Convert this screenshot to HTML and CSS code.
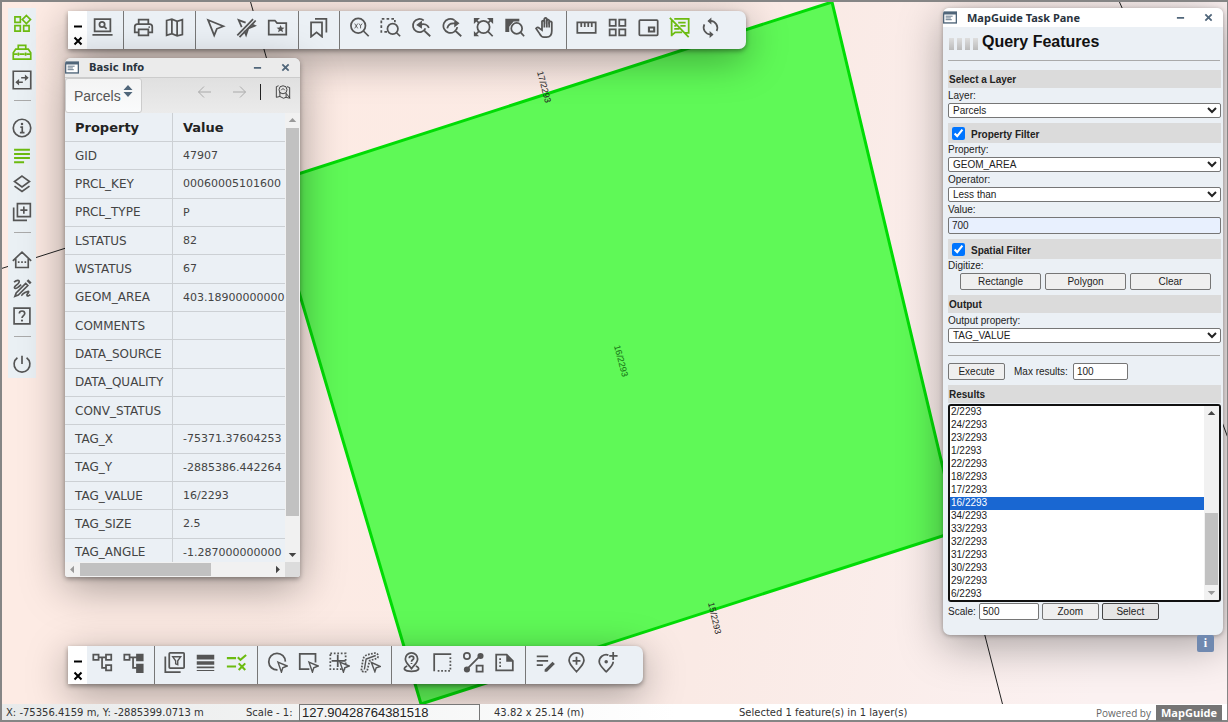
FILE: index.html
```html
<!DOCTYPE html>
<html lang="en">
<head>
<meta charset="utf-8">
<title>MapGuide Viewer</title>
<link rel="stylesheet" href="styles.css">
</head>
<body>
<svg class="defs" aria-hidden="true">
  <symbol id="i-widgets" viewBox="0 0 24 24"><path d="M3.5 3.5h6.5v6.5h-6.5zM3.5 14h6.5v6.5h-6.5zM14 14h6.5v6.5h-6.5zM17.3 1.8l4.9 4.9-4.9 4.9-4.9-4.9z"/></symbol>
  <symbol id="i-toolbox" viewBox="0 0 24 24"><path d="M1.500 20.500v-7.500l3-4.500h15l3 4.500v7.500zM7.500 8V4h9v4M2 14.500h4.500M9 14.500h6M17.500 14.500H22M7.700 12.500v4M16.300 12.500v4"/></symbol>
  <symbol id="i-swap" viewBox="0 0 24 24"><path d="M1.500 1.500h21v21h-21z M11 9.300h6M13 14.700H7"/><path class="f" d="M15.500 5.300l4.500 4-4.500 4zM8.500 10.700l-4.500 4 4.500 4z"/></symbol>
  <symbol id="i-info" viewBox="0 0 24 24"><circle cx="12" cy="12" r="10.500"/><path d="M10 11h2.300v6.500M9.500 17.500h5.500"/><circle class="f" cx="12" cy="7.200" r="1.500"/></symbol>
  <symbol id="i-lines" viewBox="0 0 24 24"><path stroke-width="2.400" d="M2.500 4.500h19M2.500 9.500h19M2.500 14.500h19M2.500 19.500h12"/></symbol>
  <symbol id="i-layers" viewBox="0 0 24 24"><path d="M12 2.500l9 6.500-9 6.500L3 9zM3 14.500l9 6.500 9-6.500"/></symbol>
  <symbol id="i-addlayer" viewBox="0 0 24 24"><path d="M6.500 2h15.500v15.500h-15.500zM2 6.500V22h16M14.200 5.500v8.500M10 9.800h8.500"/></symbol>
  <symbol id="i-home" viewBox="0 0 24 24"><path d="M1 13L12 2.500l11 10.500M4.500 10.500v10.500h15V10.500"/><path class="f" d="M7 13.500h2v2H7zM11 13.500h2v2h-2zM15 13.500h2v2h-2z"/></symbol>
  <symbol id="i-draw" viewBox="0 0 24 24"><path d="M2.500 5c3-3 7-3 6 0S2 10 3 12s5-1 8-4M16.500 6.500L5 18l-1.500 4L7.500 20.500 19 9zM12 21.500c-1-2 8-7 8-5s-3 3-2 4.500 3-.500 4-1"/><path class="f" d="M17.500 3.500l2-2 4 4-2 2z"/></symbol>
  <symbol id="i-help" viewBox="0 0 24 24"><path d="M2.500 2.500h19v19h-19zM8.800 9c0-4 6.500-4 6.500 0 0 2.500-3.300 2.500-3.300 5.500"/><circle class="f" cx="12" cy="17.500" r="1.300"/></symbol>
  <symbol id="i-power" viewBox="0 0 24 24"><path d="M12 2v10M6.500 4.500a9.500 9.500 0 1 0 11 0"/></symbol>
  <symbol id="i-preview" viewBox="0 0 24 24"><path d="M3 2.500h18v14H3zM0.500 20.500h23"/><circle cx="11.500" cy="8.500" r="3"/><path d="M13.700 10.700l3 3"/></symbol>
  <symbol id="i-print" viewBox="0 0 24 24"><path d="M6.500 8V3h11v5M6.500 17.500H2V11q0-3 3-3h14q3 0 3 3v6.500h-4.500M6.500 14h11v7h-11z"/><circle class="f" cx="18.500" cy="11.500" r="1"/></symbol>
  <symbol id="i-map" viewBox="0 0 24 24"><path d="M3 4l6-1.500 6 2.500 6-2v17l-6 1.500-6-2.500-6 2zM9 3v16M15 5v16"/></symbol>
  <symbol id="i-cursor" viewBox="0 0 24 24"><path d="M3.500 3.500l17.500 7-7.500 3-3 7.500z"/></symbol>
  <symbol id="i-nocursor" viewBox="0 0 24 24"><path d="M11 6.500L3 3.500l3.500 8M1.500 21L19.500 2.500M4 23L22.500 4M18 8.500l3.500 1.500-7.500 3-2.500 7.500-2-5"/></symbol>
  <symbol id="i-folder" viewBox="0 0 24 24"><path d="M2 4h7l2.500 3H22v13H2z"/><path class="f" d="M15.500 9l1.300 3 3.200.200-2.500 2 .900 3.200-2.900-1.800-2.900 1.800.900-3.200-2.500-2 3.200-.200z"/></symbol>
  <symbol id="i-bookmarks" viewBox="0 0 24 24"><path d="M3.500 6h12.500V22.500l-6.200-5-6.300 5zM8 2.200h13v15.500"/></symbol>
  <symbol id="i-zoomxy" viewBox="0 0 24 24"><circle cx="10.500" cy="10" r="8.300"/><path d="M16.500 16l6 6"/><path class="t" d="M6.500 7.500l3.500 5.500M10 7.500L6.500 13M11.500 7.500l1.700 2.500 1.800-2.500M13.200 10v3"/></symbol>
  <symbol id="i-zoomrect" viewBox="0 0 24 24"><path stroke-dasharray="3 2.500" d="M8 17H1.500V2H17v4"/><circle cx="14.500" cy="13.500" r="6"/><path d="M19 18l4 4"/></symbol>
  <symbol id="i-zoomprev" viewBox="0 0 24 24"><path d="M16.500 13a7.500 7.500 0 1 1-2-9M15.500 16l6.500 6M10 9c5-2 9 0 10.500 3.500"/><path class="f" d="M12.500 4v9.500L6 9z"/></symbol>
  <symbol id="i-zoomnext" viewBox="0 0 24 24"><path d="M14 3.500A8 8 0 1 0 17.500 11.500M15.500 16l6.500 6M6 13c1-5 5-6.500 10-5.500"/><path class="f" d="M14 2.500v9.500l6-5z"/></symbol>
  <symbol id="i-extent" viewBox="0 0 24 24"><circle cx="12" cy="11.500" r="7"/><path d="M17 16.500l5.500 5.500M2 2l5 5M22 2l-5 5M2 21l5-5"/><path class="f" d="M1 1h7L1 8zM23 1h-7l7 7zM1 22h6l-6-6z"/></symbol>
  <symbol id="i-zoomsel" viewBox="0 0 24 24"><path class="f" d="M1.500 2h16v3H11l-5 6v6H1.500z"/><circle cx="14.500" cy="13" r="6.200"/><path d="M19 17.500l4 4.500"/></symbol>
  <symbol id="i-pan" viewBox="0 0 24 24"><path d="M8 15V5q1.400-2 2.700 0V2q1.400-2 2.800 0v2q1.400-2 2.700 0v2q1.500-2 3 0v10q0 7-6 7h-3q-3 0-5-4l-4-6q1.500-2.500 4 0z"/><path d="M10.700 4v8M13.500 3v9M16.200 5v7"/></symbol>
  <symbol id="i-ruler" viewBox="0 0 24 24"><path d="M1.500 6h21v12h-21zM6 6v5.500M10 6v5.500M14 6v5.500M18 6v5.500"/></symbol>
  <symbol id="i-grid" viewBox="0 0 24 24"><path d="M3 3h7v7H3zM14 3h7v7h-7zM3 14h7v7H3zM14 14h7v7h-7z"/></symbol>
  <symbol id="i-pip" viewBox="0 0 24 24"><rect x="1.500" y="3.500" width="21" height="17.500" rx="1"/><path stroke-width="2.400" d="M12.500 12h6v4.500h-6z"/></symbol>
  <symbol id="i-tipoff" viewBox="0 0 24 24"><path d="M3 22V4M6 2h16.500v16h-4M3 21l4-3.500h8M1 1l21.500 22M10.500 6.500H19M13 10h6M6 10h2.500M6 13.500h6"/></symbol>
  <symbol id="i-refresh" viewBox="0 0 24 24"><path d="M10 4.500h2a8 8 0 0 1 7 11.500M14 20h-2A8 8 0 0 1 5 8.500"/><path class="f" d="M13 .500v8l-4.500-4zM11 16v8l4.500-4z"/></symbol>
  <symbol id="i-tree" viewBox="0 0 24 24"><path d="M1.500 3h6v6h-6zM16 3h6v6h-6zM16 15h6v6h-6zM7.500 6H16M11.500 6v12H16"/></symbol>
  <symbol id="i-treefull" viewBox="0 0 24 24"><path d="M1.500 3h6v6h-6zM7.500 6H16M11.500 6v12H16"/><path class="f" d="M15 2h8.500v8.500H15zM15 13.500h8.500V24H15z"/></symbol>
  <symbol id="i-filter" viewBox="0 0 24 24"><rect x="6" y="1" width="17" height="17.500" rx="1"/><path d="M1.500 5v18H19"/><path stroke-width="1.600" d="M10 5.500h9l-3.300 4.500v4.500l-2.400-1V10z"/></symbol>
  <symbol id="i-weights" viewBox="0 0 24 24"><path class="f" d="M2 3h20v5.500H2zM2 10.500h20v4H2zM2 16.500h20v2.200H2zM2 20.500h20v1.300H2z"/></symbol>
  <symbol id="i-rules" viewBox="0 0 24 24"><path stroke-width="2.400" d="M1 7h10.500M1 16.500h10.500M13.500 6l3 3L23 3.500M14.500 13l7.500 7.500M22 13l-7.500 7.500"/></symbol>
  <symbol id="i-selcircle" viewBox="0 0 24 24"><path d="M12 20.500a9.500 9.500 0 1 1 9-9.500"/><path class="arrow" d="M12.500 11.500l10.500 4.500-5 2-1.500 5z"/></symbol>
  <symbol id="i-selrect" viewBox="0 0 24 24"><path d="M13 19.500H2V2h18v10"/><path class="arrow" d="M12.500 11.500l10.500 4.500-5 2-1.500 5z"/></symbol>
  <symbol id="i-selcross" viewBox="0 0 24 24"><path stroke-dasharray="2 2" d="M1.500 1.500h17.500v18H1.500z"/><path d="M10 3v14M3 10h16"/><path class="arrow" d="M12.500 11.500l10.500 4.500-5 2-1.500 5z"/></symbol>
  <symbol id="i-selbuffer" viewBox="0 0 24 24"><path stroke-dasharray="2 1.500" d="M1.500 21L3.500 8Q5 4 9 3L18 1q4 2 2 6l-9 3-3 12q-4 2-6-1z"/><path stroke-width="1.600" d="M5 20L7 8l11-4"/><path class="arrow" d="M13 12l10 4.500-4.500 1.500-1.500 4.500z"/></symbol>
  <symbol id="i-geo" viewBox="0 0 24 24"><path d="M12 19C8 14 5 12 5 8a7 7 0 0 1 14 0c0 4-3 6-7 11zM9.500 7c0-3 5-3 5 0 0 2-2.500 1.800-2.500 4M12 12.500v1.200M7 16c-6 3-3 6 5 6s11-3 5-6"/></symbol>
  <symbol id="i-cogo" viewBox="0 0 24 24"><path d="M2.500 22V2.500H22"/><path stroke-dasharray="2 2" d="M21 6v15.500H5"/></symbol>
  <symbol id="i-query" viewBox="0 0 24 24"><circle cx="4.500" cy="4.500" r="3.500"/><path d="M15.500 15.500h7v7h-7zM5 19L19 5"/><circle class="f" cx="20" cy="4.500" r="3.500"/><circle class="f" cx="4.500" cy="20" r="3.500"/></symbol>
  <symbol id="i-theme" viewBox="0 0 24 24"><path d="M2.500 3h12L21.500 10v11h-19z"/><path class="f" d="M14 3l8 8h-8z"/><path stroke-dasharray="2 2" d="M7 7v12"/></symbol>
  <symbol id="i-redline" viewBox="0 0 24 24"><path d="M2 5h13M2 10h13M2 15h7"/><path class="f" d="M11 20l9-9 2.700 2.700-9 9H11z"/></symbol>
  <symbol id="i-pinadd" viewBox="0 0 24 24"><path d="M12 22.500C7 17 3.500 14 3.500 9.500a8.500 8.500 0 0 1 17 0C20.500 14 17 17 12 22.500zM12 5.500v9M7.500 10h9"/></symbol>
  <symbol id="i-pinplus" viewBox="0 0 24 24"><path d="M13 3.500A8 8 0 0 0 2.500 11c0 4 3.500 7 8 11.500 4.500-4.500 8-7.500 8-11.500M18.500 0v9M14 4.500h9.500"/><circle class="f" cx="10.500" cy="11" r="2"/></symbol>
  <symbol id="i-window" viewBox="0 0 16 14"><rect x="0" y="0" width="16" height="14" fill="#50667a" stroke="none"/><path d="M1.500 3.500h13v9h-13z" fill="#fff" stroke="none"/><path stroke-width="1" stroke="#50667a" d="M3 5.500h8M3 7.500h6M3 9.500h7"/></symbol>
  <symbol id="i-min" viewBox="0 0 10 10"><path d="M1 5.500h8"/></symbol>
  <symbol id="i-close" viewBox="0 0 10 10"><path d="M1.500 1.500l7 7M8.500 1.500l-7 7"/></symbol>
  <symbol id="i-left" viewBox="0 0 14 14"><path d="M14 7H1.500M7 1.500L1.500 7 7 12.500"/></symbol>
  <symbol id="i-right" viewBox="0 0 14 14"><path d="M0 7h12.500M7 1.500L12.500 7 7 12.500"/></symbol>
  <symbol id="i-zoommap" viewBox="0 0 18 18"><path d="M4 2L1.500 3v12l4-1 4 2 3-1 4 1V4l-3-1M5.500 9v5M12.500 11v4"/><circle cx="9" cy="6.500" r="4.500"/><path d="M12 10l5 6M7 7l2-2 2 2"/></symbol>
</svg>

<main class="viewer">
  <section class="map" aria-label="Map">
    <svg class="map-art" viewBox="0 0 1226 702" preserveAspectRatio="xMinYMin slice">
      <path class="parcel" d="M830 0L956 529 419 702 265 182z"/>
      <path class="boundary" d="M248 -2L269 72M-2 267L64 246M981 626L1001 704M1117 -1L1121 8M1220 420L1226 436"/>
      <text transform="translate(535 70) rotate(75)">17/2293</text>
      <text class="dim" transform="translate(612 344) rotate(75)">16/2293</text>
      <text transform="translate(706 601) rotate(77)">15/2293</text>
    </svg>

    <nav class="side" aria-label="Commands">
      <button class="on" aria-label="Widgets"><svg><use href="#i-widgets"/></svg></button>
      <button class="on" aria-label="Toolbox"><svg><use href="#i-toolbox"/></svg></button>
      <button aria-label="Switch"><svg><use href="#i-swap"/></svg></button>
      <hr>
      <button aria-label="Information"><svg><use href="#i-info"/></svg></button>
      <button class="on" aria-label="Legend"><svg><use href="#i-lines"/></svg></button>
      <button aria-label="Layers"><svg><use href="#i-layers"/></svg></button>
      <button aria-label="Add layer"><svg><use href="#i-addlayer"/></svg></button>
      <hr>
      <button aria-label="Home"><svg><use href="#i-home"/></svg></button>
      <button aria-label="Draw"><svg><use href="#i-draw"/></svg></button>
      <button aria-label="Help"><svg><use href="#i-help"/></svg></button>
      <hr>
      <button aria-label="Log out"><svg><use href="#i-power"/></svg></button>
    </nav>

    <div class="toolbar top" role="toolbar" aria-label="Map tools">
      <div class="handle"><button aria-label="Minimize"><svg><use href="#i-min"/></svg></button><button aria-label="Close"><svg><use href="#i-close"/></svg></button></div>
      <div class="group"><button aria-label="Preview"><svg><use href="#i-preview"/></svg></button></div>
      <div class="group"><button aria-label="Print"><svg><use href="#i-print"/></svg></button><button aria-label="Plot map"><svg><use href="#i-map"/></svg></button></div>
      <div class="group"><button aria-label="Select"><svg><use href="#i-cursor"/></svg></button><button aria-label="Clear selection"><svg><use href="#i-nocursor"/></svg></button><button aria-label="Saved selections"><svg><use href="#i-folder"/></svg></button></div>
      <div class="group"><button aria-label="Bookmarks"><svg><use href="#i-bookmarks"/></svg></button></div>
      <div class="group"><button aria-label="Zoom to XY"><svg><use href="#i-zoomxy"/></svg></button><button aria-label="Zoom rectangle"><svg><use href="#i-zoomrect"/></svg></button><button aria-label="Previous view"><svg><use href="#i-zoomprev"/></svg></button><button aria-label="Next view"><svg><use href="#i-zoomnext"/></svg></button><button aria-label="Full extent"><svg><use href="#i-extent"/></svg></button><button aria-label="Zoom to selection"><svg><use href="#i-zoomsel"/></svg></button><button aria-label="Pan"><svg><use href="#i-pan"/></svg></button></div>
      <div class="group"><button aria-label="Measure"><svg><use href="#i-ruler"/></svg></button><button aria-label="Gallery"><svg><use href="#i-grid"/></svg></button><button aria-label="Overview"><svg><use href="#i-pip"/></svg></button><button class="on" aria-label="Tooltips off"><svg><use href="#i-tipoff"/></svg></button><button aria-label="Refresh"><svg><use href="#i-refresh"/></svg></button></div>
    </div>

    <section class="window info" aria-label="Basic Info">
      <header><svg class="wicon"><use href="#i-window"/></svg><h2>Basic Info</h2><button aria-label="Minimize"><svg><use href="#i-min"/></svg></button><button aria-label="Close"><svg><use href="#i-close"/></svg></button></header>
      <div class="info-bar">
        <label class="picker"><select aria-label="Layer"><option>Parcels</option></select><svg viewBox="0 0 10 14"><path d="M5 1l4.500 5h-9zM5 13L.5 8h9z"/></svg></label>
        <button aria-label="Previous"><svg><use href="#i-left"/></svg></button>
        <button aria-label="Next"><svg><use href="#i-right"/></svg></button>
        <button class="zoom" aria-label="Zoom to feature"><svg><use href="#i-zoommap"/></svg></button>
      </div>
      <div class="info-body">
        <div class="clip">
          <table>
            <thead><tr><th>Property</th><th>Value</th></tr></thead>
            <tbody>
              <tr><td>GID</td><td>47907</td></tr>
              <tr><td>PRCL_KEY</td><td>00060005101600</td></tr>
              <tr><td>PRCL_TYPE</td><td>P</td></tr>
              <tr><td>LSTATUS</td><td>82</td></tr>
              <tr><td>WSTATUS</td><td>67</td></tr>
              <tr><td>GEOM_AREA</td><td>403.18900000000</td></tr>
              <tr><td>COMMENTS</td><td></td></tr>
              <tr><td>DATA_SOURCE</td><td></td></tr>
              <tr><td>DATA_QUALITY</td><td></td></tr>
              <tr><td>CONV_STATUS</td><td></td></tr>
              <tr><td>TAG_X</td><td>-75371.37604253</td></tr>
              <tr><td>TAG_Y</td><td>-2885386.442264</td></tr>
              <tr><td>TAG_VALUE</td><td>16/2293</td></tr>
              <tr><td>TAG_SIZE</td><td>2.5</td></tr>
              <tr><td>TAG_ANGLE</td><td>-1.287000000000</td></tr>
            </tbody>
          </table>
        </div>
        <div class="vbar"><i class="up off"></i><b></b><i class="down"></i></div>
        <div class="hbar"><i class="lt off"></i><b></b><i class="rt"></i></div>
        <div class="corner"></div>
      </div>
    </section>

    <section class="window task" aria-label="MapGuide Task Pane">
      <header><svg class="wicon"><use href="#i-window"/></svg><h2>MapGuide Task Pane</h2><button aria-label="Minimize"><svg><use href="#i-min"/></svg></button><button aria-label="Close"><svg><use href="#i-close"/></svg></button></header>
      <form class="query">
        <h1><span class="ticks"><i></i><i></i><i></i><i></i></span>Query Features</h1>
        <hr>
        <h3>Select a Layer</h3>
        <label for="layer">Layer:</label>
        <select id="layer"><option>Parcels</option></select>
        <h3 class="check"><input type="checkbox" id="pf" checked><label for="pf">Property Filter</label></h3>
        <label for="prop">Property:</label>
        <select id="prop"><option>GEOM_AREA</option></select>
        <label for="op">Operator:</label>
        <select id="op"><option>Less than</option></select>
        <label for="val">Value:</label>
        <input type="text" class="filled" id="val" value="700">
        <h3 class="check"><input type="checkbox" id="sf" checked><label for="sf">Spatial Filter</label></h3>
        <span class="caption">Digitize:</span>
        <div class="digitize"><button type="button">Rectangle</button><button type="button">Polygon</button><button type="button">Clear</button></div>
        <h3>Output</h3>
        <label for="out">Output property:</label>
        <select id="out"><option>TAG_VALUE</option></select>
        <hr class="low">
        <div class="row run"><button type="button">Execute</button><label for="max">Max results:</label><input type="text" id="max" value="100"></div>
        <h3>Results</h3>
        <div class="listbox">
          <select size="15" aria-label="Results">
            <option>2/2293</option><option>24/2293</option><option>23/2293</option><option>1/2293</option><option>22/2293</option><option>18/2293</option><option>17/2293</option><option selected>16/2293</option><option>34/2293</option><option>33/2293</option><option>32/2293</option><option>31/2293</option><option>30/2293</option><option>29/2293</option><option>6/2293</option>
          </select>
          <div class="vbar"><i class="up"></i><b></b><i class="down off"></i></div>
        </div>
        <div class="row goto"><label for="scale">Scale:</label><input type="text" id="scale" value="500"><button type="button">Zoom</button><button type="button" class="active">Select</button></div>
      </form>
    </section>
    <button class="attribution" aria-label="Attribution">i</button>

    <div class="toolbar bottom" role="toolbar" aria-label="Feature tools">
      <div class="handle"><button aria-label="Minimize"><svg><use href="#i-min"/></svg></button><button aria-label="Close"><svg><use href="#i-close"/></svg></button></div>
      <div class="group"><button aria-label="Collapse tree"><svg><use href="#i-tree"/></svg></button><button aria-label="Expand tree"><svg><use href="#i-treefull"/></svg></button></div>
      <div class="group"><button aria-label="Filter layers"><svg><use href="#i-filter"/></svg></button><button aria-label="Line weights"><svg><use href="#i-weights"/></svg></button><button class="on" aria-label="Rules"><svg><use href="#i-rules"/></svg></button></div>
      <div class="group"><button aria-label="Select by circle"><svg><use href="#i-selcircle"/></svg></button><button aria-label="Select by rectangle"><svg><use href="#i-selrect"/></svg></button><button aria-label="Select within"><svg><use href="#i-selcross"/></svg></button><button aria-label="Buffer"><svg><use href="#i-selbuffer"/></svg></button></div>
      <div class="group"><button aria-label="Geocode"><svg><use href="#i-geo"/></svg></button><button aria-label="Coordinates"><svg><use href="#i-cogo"/></svg></button><button aria-label="Query"><svg><use href="#i-query"/></svg></button><button aria-label="Theme"><svg><use href="#i-theme"/></svg></button></div>
      <div class="group"><button aria-label="Redline"><svg><use href="#i-redline"/></svg></button><button aria-label="Add marker"><svg><use href="#i-pinadd"/></svg></button><button aria-label="New marker"><svg><use href="#i-pinplus"/></svg></button></div>
    </div>
  </section>

  <footer class="status">
    <span class="coords">X: -75356.4159 m, Y: -2885399.0713 m</span>
    <label for="mapscale">Scale - 1:</label>
    <input type="text" id="mapscale" value="127.90428764381518">
    <span class="size">43.82 x 25.14 (m)</span>
    <span class="selected">Selected 1 feature(s) in 1 layer(s)</span>
    <span class="powered">Powered by <a href="#">MapGuide</a></span>
  </footer>
</main>
</body>
</html>
```

FILE: styles.css
```css
* { box-sizing: border-box; }
body { margin: 0; font-family: "DejaVu Sans", sans-serif; font-size: 11px; color: #333; }
button { border: 0; padding: 0; background: none; font: inherit; color: inherit; }
h1, h2, h3 { margin: 0; }
hr { margin: 0; border: 0; }
.defs { position: absolute; width: 0; height: 0; }
svg { display: block; fill: none; stroke: currentColor; stroke-width: 2; }
.f { fill: currentColor; stroke: none; }
.t { stroke-width: 1; }
.arrow { fill: #ebf0f5; stroke-width: 1.6px; }

.viewer { height: 100vh; display: flex; flex-direction: column; border: 2px solid #858585; border-right-width: 1px; }
.map { flex: 1; min-height: 0; position: relative; overflow: hidden; background: linear-gradient(100deg, #fdebe4 20%, #faeae5 60%, #fbf1f1 90%); }
.map-art { position: absolute; inset: 0; width: 100%; height: 100%; }
.parcel { fill: #5ff957; stroke: #00dc05; stroke-width: 3; }
.boundary { stroke: #222; stroke-width: 1; }
.map-art text { fill: #222; stroke: none; font: 9px "Liberation Sans", sans-serif; }
.map-art .dim { fill: #146e12; }

.side { position: absolute; left: 6px; top: 6px; width: 28px; padding-top: 2px; background: #eaf0f4; color: #555; }
.side button { width: 28px; height: 28px; display: grid; place-items: center; }
.side svg { width: 20px; height: 20px; }
.side .on, .toolbar .on { color: #6cbb10; }
.side hr { width: 17px; height: 20px; margin: 0 auto; border-top: 6px solid transparent; background: linear-gradient(#aaa 0 1px, transparent 1px); background-clip: padding-box; }

.toolbar { position: absolute; left: 66px; height: 38px; display: flex; padding-right: 15px; background: #ebf0f5; color: #555; border-radius: 0 7px 7px 0; box-shadow: 0 2px 5px rgba(0,0,0,.4), 0 10px 40px rgba(0,0,0,.36); }
.top { top: 9px; }
.bottom { bottom: 20px; }
.handle { width: 19px; padding: 10px 0 0 5px; background: #fff; color: #000; display: flex; flex-direction: column; gap: 5px; }
.handle svg { width: 10px; height: 10px; }
.group { display: flex; padding: 0 5px 0 4px; border-right: 1px solid #777; }
.handle + .group { padding-left: 0; }
.group:last-child { border: 0; }
.group button { width: 31px; height: 33px; display: grid; place-items: center; }
.group svg { width: 21px; height: 21px; }

.window { position: absolute; display: flex; flex-direction: column; overflow: hidden; border-radius: 6px 6px 3px 3px; background: #ebf0f5; }
.window header { height: 19px; display: flex; align-items: center; padding-right: 9px; color: #50667a; }
.window h2 { flex: 1; font-size: 10px; line-height: 19px; color: #29333d; }
.window .wicon { width: 14px; height: 13px; margin-right: 10px; }
.window header button { width: 10px; margin-left: 18px; }
.window header button svg { width: 9px; height: 9px; }

.info { left: 63px; top: 56px; width: 235px; box-shadow: 0 2px 5px rgba(0,0,0,.35), 0 10px 44px rgba(0,0,0,.36); }
.info header { background: #ebebeb; border-bottom: 1px solid #ccc; height: 20px; }
.info-bar { height: 35px; display: flex; align-items: center; padding-bottom: 8px; background: linear-gradient(#e0e0e0, #ebebeb); color: #aaa; }
.info-bar > button { width: 14px; margin-right: 22px; }
.info-bar button svg { width: 14px; height: 14px; stroke-width: 1; }
.info-bar .picker { position: relative; width: 77px; height: 35px; margin: 8px 55px 0 0; }
.picker select { width: 77px; height: 35px; appearance: none; padding: 0 8px; border: 1px solid #ccc; border-radius: 3px; background: linear-gradient(#f4f4f4, #fafbfc); font: 14px "Liberation Sans", sans-serif; color: #555; }
.picker svg { position: absolute; right: 9px; top: 6px; width: 10px; height: 14px; fill: #50667a; stroke: none; }
.info-bar > .zoom { width: 32px; height: 16px; margin: 0 0 0 -9px; padding-left: 13px; border-left: 1px solid #222; color: #333; }
.info-bar .zoom svg { width: 18px; height: 16px; }
.info-body { display: grid; grid-template-columns: 1fr 15px; grid-template-rows: 449px 15px; }
.clip { overflow: hidden; min-width: 0; }
table { table-layout: fixed; width: 280px; height: 454px; border-collapse: separate; border-spacing: 0; color: #444; }
th, td { height: 28px; padding: 0 0 0 10px; border-bottom: 1px solid #ccd0d4; text-align: left; white-space: nowrap; }
th { height: 29px; font-size: 13px; color: #222; }
td:first-child { font-size: 12px; }
th:first-child, td:first-child { width: 108px; border-right: 1px solid #ccd0d4; }

.vbar, .hbar { display: flex; align-items: center; background: #f1f1f1; }
.vbar { flex-direction: column; width: 15px; }
.vbar i, .hbar i { flex: none; width: 15px; height: 15px; background: #444; }
.vbar b, .hbar b { background: #c1c1c1; }
.vbar b { width: 13px; }
.hbar b { height: 13px; width: 131px; margin-right: auto; }
.up { clip-path: polygon(50% 34%, 75% 60%, 25% 60%); }
.down { clip-path: polygon(50% 66%, 75% 40%, 25% 40%); }
.lt { clip-path: polygon(34% 50%, 60% 25%, 60% 75%); }
.rt { clip-path: polygon(66% 50%, 40% 25%, 40% 75%); }
.vbar .off, .hbar .off { background: #999; }
.info .vbar b { height: 388px; margin-bottom: auto; }
.corner { background: #dcdcdc; }

.task { right: 4px; top: 6px; width: 280px; border-bottom-left-radius: 7px; border-bottom-right-radius: 7px; box-shadow: 0 1px 4px rgba(0,0,0,.3), 0 10px 44px rgba(0,0,0,.34); }
.task header { background: #fff; }
.task h2 { font-family: "Noto Sans", sans-serif; font-size: 11px; }
.query { display: flex; flex-direction: column; padding: 0 2px 15px 5px; font: 10px "Liberation Sans", sans-serif; color: #222; }
.query h1 { display: flex; align-items: center; height: 29px; font-size: 16px; color: #111; }
.ticks { display: flex; gap: 3px; margin: 5px 4px 0 1px; }
.ticks i { width: 5px; height: 12px; background: linear-gradient(#dedede, #bbb); }
.query hr { height: 1px; margin: 4px 1px 9px 0; background: #aaa; }
.query .low { margin: 12px 1px 7px 0; }
.query h3 { height: 18px; padding: 0 1px; line-height: 19px; font-size: 10px; background: #dbdbdb; }
.query .check { display: flex; align-items: center; height: 20px; margin-top: 5px; }
.check input { width: 13px; height: 13px; margin: 0 6px 0 3px; }
.query .check label { line-height: 20px; padding-top: 3px; }
.query label, .caption { line-height: 15px; }
.query .check + label, .check + .caption { line-height: 14px; }
.query select, .query input[type="text"], .query button { font: inherit; color: #222; border: 1px solid #767676; border-radius: 2px; }
.query > select { width: 100%; height: 15px; background-color: #fff; padding: 0; }
.query input[type="text"] { height: 17px; padding: 0 3px; background: #fff; }
.query input.filled { background: #e8f0fe; }
.query button { height: 17px; background: #efefef; }
.digitize { display: grid; grid-template-columns: 1fr 1fr 1fr; gap: 4px; padding: 0 10px 5px 12px; }
.row { display: flex; align-items: center; }
.row button { width: 57px; }
.query .active { background: #e5e5e5; border-color: #444; }
.run { padding-bottom: 5px; height: 22px; }
.run label { margin: 0 5px 0 9px; }
.run input { width: 55px; }
.listbox { display: flex; align-items: stretch; height: 198px; margin-top: 1px; border: 2px solid #111; border-radius: 3px; background: #fff; overflow: hidden; }
.query .listbox select { flex: 1; height: 196px; border: 0; padding: 0; background: #fff; overflow: hidden; }
.listbox option { height: 13px; min-height: 0; padding: 0 1px; line-height: 13px; }
.listbox option:checked { background: #1967d2 linear-gradient(#1967d2, #1967d2); color: #fff; -webkit-text-fill-color: #fff; }
.listbox .vbar b { height: 72px; margin-top: auto; }
.goto { margin-top: 1px; gap: 3px; }
.goto input { width: 60px; }

.attribution { position: absolute; right: 13px; bottom: 52px; width: 17px; height: 17px; border-radius: 2px; background: #7089b0; color: #fff; font: bold 12px "Liberation Serif", serif; }

.status { height: 16px; display: grid; grid-template-columns: 244px 53px 181px 14px 245px 1fr auto; align-items: center; line-height: 16px; font-size: 10px; color: #333; background: linear-gradient(90deg, #e8eaea, #fff 55%); }
.coords { padding-left: 4px; }
.status input { width: 181px; height: 17px; padding: 0 2px; border: 1px solid #777; font: 13px "Liberation Sans", sans-serif; color: #222; background: transparent; }
.size { grid-column: 5; }
.powered { display: flex; gap: 5px; padding-right: 5px; font: 10px/16px "Open Sans", sans-serif; color: #666; }
.powered a { width: 66px; background: #757575; color: #fff; font-size: 11px; font-weight: bold; text-align: center; text-decoration: none; }
```
